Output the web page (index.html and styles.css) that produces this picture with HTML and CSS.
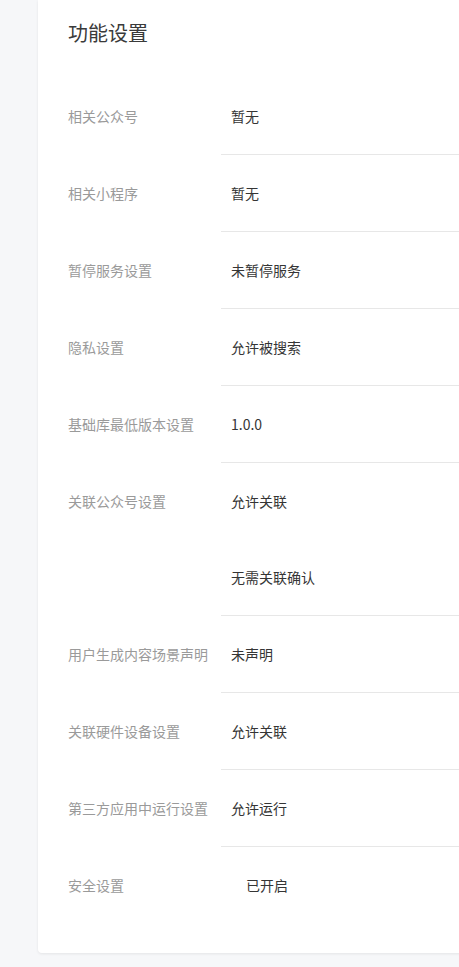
FILE: index.html
```html
<!DOCTYPE html>
<html lang="zh-CN">
<head>
<meta charset="utf-8">
<title>功能设置</title>
<link rel="stylesheet" href="styles.css">
</head>
<body>
<div class="page">
  <section class="card">
    <h2 class="title">功能设置</h2>
    <div class="list">
      <div class="row"><div class="label">相关公众号</div><div class="values"><div class="value">暂无</div></div></div>
      <div class="row"><div class="label">相关小程序</div><div class="values"><div class="value">暂无</div></div></div>
      <div class="row"><div class="label">暂停服务设置</div><div class="values"><div class="value">未暂停服务</div></div></div>
      <div class="row"><div class="label">隐私设置</div><div class="values"><div class="value">允许被搜索</div></div></div>
      <div class="row"><div class="label">基础库最低版本设置</div><div class="values"><div class="value">1.0.0</div></div></div>
      <div class="row"><div class="label">关联公众号设置</div><div class="values"><div class="value">允许关联</div><div class="value">无需关联确认</div></div></div>
      <div class="row"><div class="label">用户生成内容场景声明</div><div class="values"><div class="value">未声明</div></div></div>
      <div class="row"><div class="label">关联硬件设备设置</div><div class="values"><div class="value">允许关联</div></div></div>
      <div class="row"><div class="label">第三方应用中运行设置</div><div class="values"><div class="value">允许运行</div></div></div>
      <div class="row last"><div class="label">安全设置</div><div class="values"><div class="value">已开启</div></div></div>
    </div>
  </section>
</div>
</body>
</html>
```

FILE: styles.css
```css
html, body {
  margin: 0;
  padding: 0;
}
body {
  background: #f6f7f9;
  font-family: "Noto Sans CJK SC", "Noto Sans", sans-serif;
  overflow: hidden;
  width: 459px;
}
.page {
  padding-left: 38px;
  padding-bottom: 14px;
  overflow: hidden;
}
.card {
  width: 640px;
  background: #ffffff;
  border-radius: 0 0 4px 4px;
  box-shadow: 0 1px 3px rgba(0, 0, 0, 0.08);
  padding: 19px 0 30px 30px;
  box-sizing: border-box;
}
.title {
  margin: 0 0 31px 0;
  font-size: 20px;
  line-height: 28px;
  font-weight: 400;
  color: #3a3a3a;
}
.row {
  display: flex;
  align-items: flex-start;
}
.label {
  width: 153px;
  flex: none;
  height: 76px;
  display: flex;
  align-items: center;
  font-size: 14px;
  color: #9a9a9a;
  white-space: nowrap;
}
.values {
  flex: 1;
  border-bottom: 1px solid #e7e7e7;
}
.value {
  height: 76px;
  display: flex;
  align-items: center;
  padding-left: 10px;
  box-sizing: border-box;
  font-size: 14px;
  color: #353535;
}
.last .values {
  border-bottom: none;
}
.last .value {
  padding-left: 25px;
}
```
